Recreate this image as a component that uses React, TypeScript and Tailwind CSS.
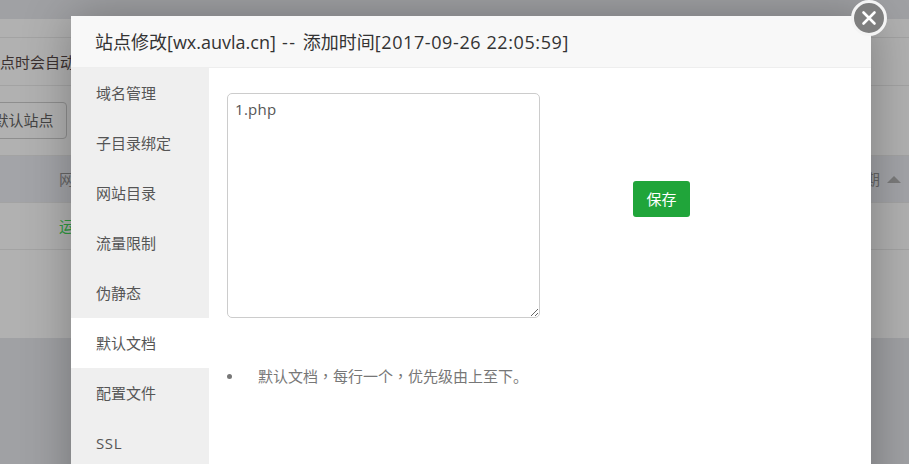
const menu = ['域名管理', '子目录绑定', '网站目录', '流量限制', '伪静态', '默认文档', '配置文件', 'SSL'];

function Backdrop() {
  return (
    <div className="h-[464px] bg-[#a0a1a4] pt-[19px]">
      <div className="h-[319px] bg-[#b1b1b1]">
        <div className="h-[19px] border-b border-[#a3a3a3]" />
        <div className="flex h-[48px] items-center overflow-hidden border-b border-[#a3a3a3] text-[15px] text-[#3a3030]">
          <span className="-ml-[15px] pt-[2px] whitespace-nowrap">站点时会自动</span>
        </div>
        <div className="flex h-[70px] items-center border-b border-[#a3a3a3]">
          <div className="-ml-[30px] flex h-[37px] w-[97px] items-center justify-center rounded border border-[#8e8e8e] pl-[10px] text-[15px] text-[#444]">
            默认站点
          </div>
        </div>
        <div className="flex h-[47px] items-center justify-between border-b border-[#a3a3a3] bg-[#a3a4a8] pl-[59px] pr-[8px] text-[15px] text-[#666]">
          <span>网</span>
          <div className="flex items-center gap-[7px]">
            <span>期</span>
            <div className="h-0 w-0 border-x-[7px] border-b-[7px] border-x-transparent border-b-[#7b7b7b]" />
          </div>
        </div>
        <div className="flex h-[47px] items-center border-b border-[#a3a3a3] pl-[59px] text-[15px] text-[#2f9a3f]">运</div>
      </div>
    </div>
  );
}

export default function App() {
  return (
    <div className='relative h-[464px] w-[909px] overflow-hidden font-["Open_Sans","Noto_Sans_CJK_SC",sans-serif]'>
      <Backdrop />

      <div className="absolute left-[71px] top-[16px] h-[520px] w-[800px] rounded-t-[3px] bg-white shadow-[1px_1px_50px_rgba(0,0,0,0.3)]">
        <div className="flex h-[52px] items-center whitespace-pre border-b border-[#eeeeee] bg-[#f8f8f8] pl-[24px] pt-[1px] text-[18px] text-[#333]">
          <span>站点修改[wx.auvla.cn]</span>
          <span className="tracking-[1.5px]"> -- </span>
          <span>添加时间</span>
          <span className="tracking-[0.6px]">[2017-09-26 22:05:59]</span>
        </div>
        <div className="flex h-[468px]">
          <div className="w-[138px] bg-[#efefef]">
            {menu.map((item) => (
              <div
                key={item}
                className={`flex h-[50px] items-center pl-[25px] pt-[1px] text-[15px] text-[#555] ${item === '默认文档' ? 'bg-white' : ''} ${item === 'SSL' ? 'tracking-[0.6px]' : ''}`}
              >
                {item}
              </div>
            ))}
          </div>
          <div className="flex-1 pl-[18px] pt-[25px]">
            <div className="flex items-start">
              <textarea
                defaultValue="1.php"
                className="h-[225px] w-[313px] rounded-[5px] border border-[#cccccc] px-[7px] py-[4px] text-[15px] tracking-[0.3px] text-[#555] outline-none"
              />
              <button className="ml-[93px] mt-[88px] h-[36px] w-[57px] rounded-[3px] bg-[#20a53a] text-[15px] text-white">保存</button>
            </div>
            <div className="mt-[47px] flex items-center gap-[26px] text-[15px] leading-[22px] text-[#777]">
              <span className="h-[5px] w-[5px] rounded-full bg-[#777]" />
              <span>
                默认文档<span className='font-["Noto_Sans_CJK_TC"]'>，</span>每行一个<span className='font-["Noto_Sans_CJK_TC"]'>，</span>优先级由上至下。
              </span>
            </div>
          </div>
        </div>
      </div>

      <div className="absolute left-[851px] top-0 flex h-[36px] w-[36px] items-center justify-center rounded-full border-[3px] border-[#f4f4f4] bg-[#7f7f7f]">
        <svg width="16" height="16" viewBox="0 0 16 16" fill="none" stroke="white" strokeWidth="2.6" strokeLinecap="round">
          <path d="M2.5 2.5 L13.5 13.5 M13.5 2.5 L2.5 13.5" />
        </svg>
      </div>
    </div>
  );
}
